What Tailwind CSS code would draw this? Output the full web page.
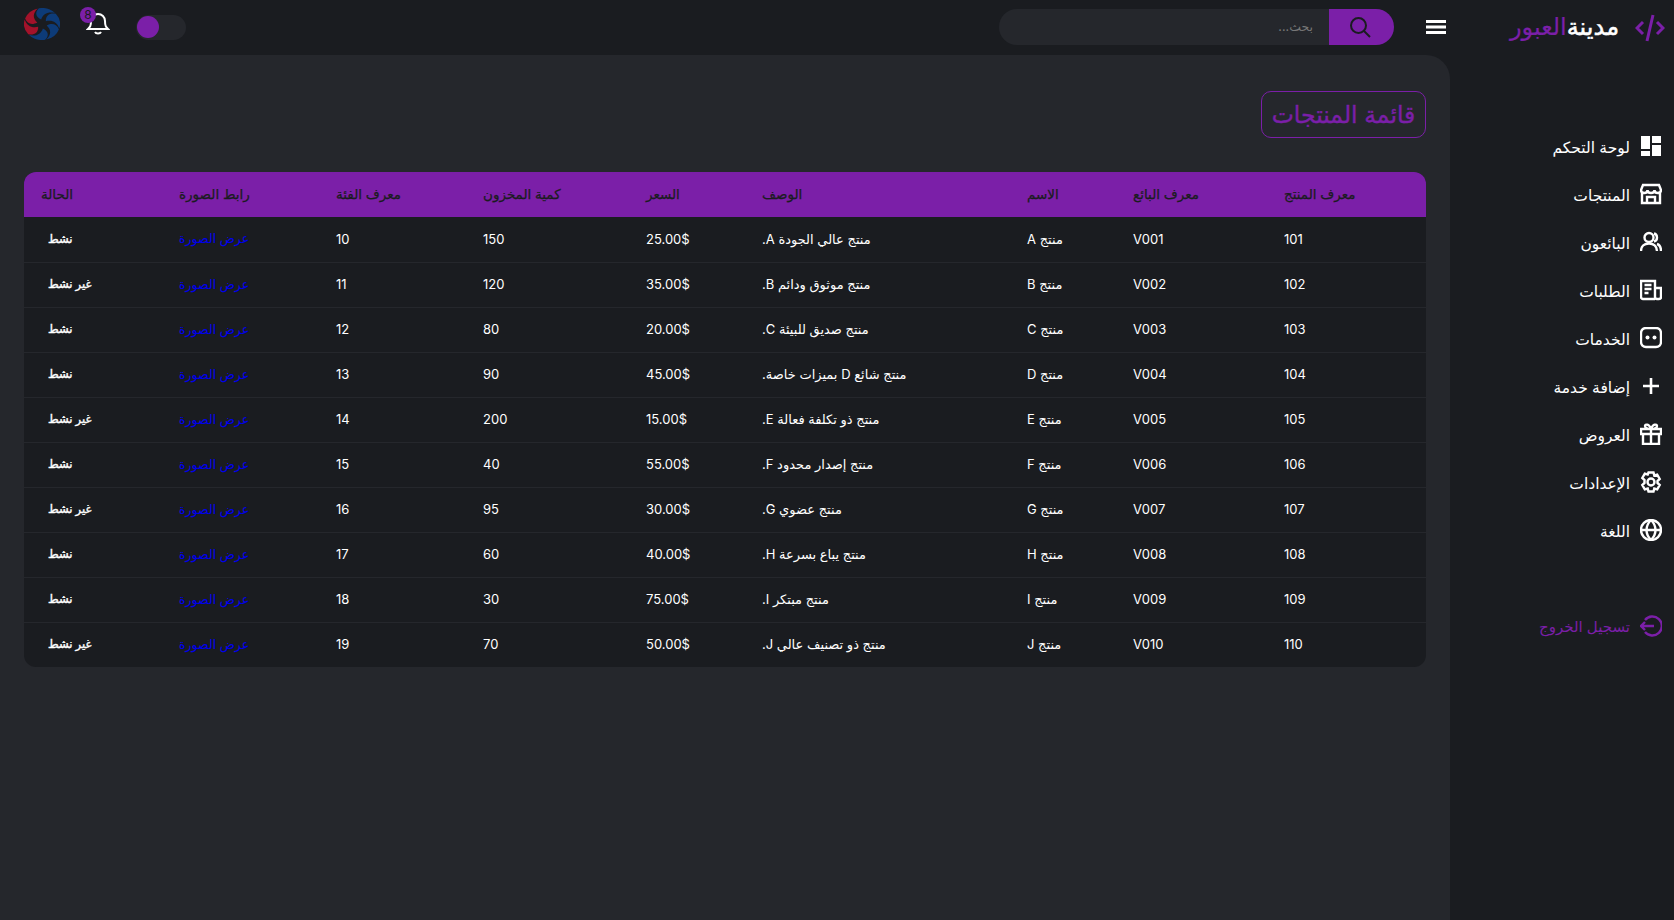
<!DOCTYPE html>
<html lang="ar" dir="rtl">
<head>
    <meta charset="UTF-8">
    <title>قائمة المنتجات</title>
    <script src="https://cdn.jsdelivr.net/npm/@tailwindcss/browser@4"></script>
</head>
<body class="h-screen overflow-hidden bg-[#1a1c20] font-['Inter','DejaVu_Sans',sans-serif] text-white">
    <div class="flex h-full">
        <!-- sidebar -->
        <aside class="w-[224px] shrink-0">
            <div class="flex h-[55px] items-center gap-[16px] pr-[9px]">
                <svg class="h-[30px] w-[30px] shrink-0 text-[#7b1fa8]" viewBox="0 0 30 30" fill="none" stroke="currentColor" stroke-width="3"><path d="M8 9 2 15l6 6M22 9l6 6-6 6M18 2l-6 26"/></svg>
                <div class="mt-[-2px] text-[24px] leading-none [-webkit-text-stroke:0.5px]"><span>مدينة</span><span class="text-[#7b1fa8] [-webkit-text-stroke:0.2px]">العبور</span></div>
            </div>
            <nav class="mt-[67px] flex flex-col text-[15.5px]">
                <a class="flex h-[48px] items-center gap-[10px] pr-[12px]"><svg class="h-[22px] w-[22px]" viewBox="0 0 22 22" fill="currentColor"><path d="M1 1h9v13H1zM12 1h9v7h-9zM12 10h9v11h-9zM1 16h9v5H1z"/></svg><span class="mt-[3px]">لوحة التحكم</span></a>
                <a class="flex h-[48px] items-center gap-[10px] pr-[12px]"><svg class="h-[22px] w-[22px]" viewBox="0 0 22 22" fill="none" stroke="currentColor" stroke-width="2.400"><path d="M2 10v10h18V10M1 7l2-5h16l2 5c0 2-1.500 3-3.300 3S14.500 9 14.500 7c0 2-1.700 3-3.500 3S7.500 9 7.500 7c0 2-1.400 3-3.200 3S1 9 1 7ZM7 19v-5h8v5"/></svg><span class="mt-[3px]">المنتجات</span></a>
                <a class="flex h-[48px] items-center gap-[10px] pr-[12px]"><svg class="h-[22px] w-[22px]" viewBox="0 0 22 22" fill="none" stroke="currentColor" stroke-width="2.400"><circle cx="9" cy="6.500" r="4.500"/><path d="M1 20c0-5 3.500-7.500 8-7.500s8 2.500 8 7.500M14 2.500c4 .8 4 7 0 8M17 13c3 1 4 3.500 4 7"/></svg><span class="mt-[3px]">البائعون</span></a>
                <a class="flex h-[48px] items-center gap-[10px] pr-[12px]"><svg class="h-[22px] w-[22px]" viewBox="0 0 22 22" fill="none" stroke="currentColor" stroke-width="2.400"><path d="M15 20H3a2 2 0 0 1-2-2V2h14v16a2 2 0 0 0 2 2h2a2 2 0 0 0 2-2V9h-6M4.500 6h7M4.500 10h7M4.500 14h4"/></svg><span class="mt-[3px]">الطلبات</span></a>
                <a class="flex h-[48px] items-center gap-[10px] pr-[12px]"><svg class="h-[22px] w-[22px]" viewBox="0 0 22 22" fill="none" stroke="currentColor" stroke-width="2.400"><rect x="1" y="1" width="20" height="19" rx="5"/><circle cx="7.500" cy="10.500" r="2" fill="currentColor" stroke="none"/><circle cx="14.500" cy="10.500" r="2" fill="currentColor" stroke="none"/></svg><span class="mt-[3px]">الخدمات</span></a>
                <a class="flex h-[48px] items-center gap-[10px] pr-[12px]"><svg class="h-[22px] w-[22px]" viewBox="0 0 22 22" fill="none" stroke="currentColor" stroke-width="2.600"><path d="M11 3v16M3 11h16"/></svg><span class="mt-[3px]">إضافة خدمة</span></a>
                <a class="flex h-[48px] items-center gap-[10px] pr-[12px]"><svg class="h-[22px] w-[22px]" viewBox="0 0 22 22" fill="none" stroke="currentColor" stroke-width="2.400"><path d="M1 6h20v5H1zM3 11v10h16V11M11 6v15M11 6C8 6 5 5 5 3s4-2.500 6 3c2-5.500 6-5 6-3s-3 3-6 3Z"/></svg><span class="mt-[3px]">العروض</span></a>
                <a class="flex h-[48px] items-center gap-[10px] pr-[12px]"><svg class="h-[22px] w-[22px]" viewBox="0 0 22 22" fill="none" stroke="currentColor" stroke-width="2.400"><circle cx="11" cy="11" r="3.500"/><path d="M8.500 1.500h5l.8 3 2.900-.9 2.500 4.400-2.200 2v2l2.200 2-2.500 4.400-2.900-.9-.8 3h-5l-.8-3-2.900.9-2.500-4.400 2.200-2v-3l-2.200-2 2.500-4.400 2.900.9Z"/></svg><span class="mt-[3px]">الإعدادات</span></a>
                <a class="flex h-[48px] items-center gap-[10px] pr-[12px]"><svg class="h-[22px] w-[22px]" viewBox="0 0 22 22" fill="none" stroke="currentColor" stroke-width="2.400"><circle cx="11" cy="11" r="10"/><path d="M1 11h20M11 1c-6 6-6 14 0 20M11 1c6 6 6 14 0 20"/></svg><span class="mt-[3px]">اللغة</span></a>
                <a class="mt-[48px] flex h-[48px] items-center gap-[10px] pr-[12px] text-[15px] text-[#7b1fa8]"><svg class="h-[22px] w-[22px]" viewBox="0 0 22 22" fill="none" stroke="currentColor" stroke-width="2.400"><path d="M5 5a9.500 9.500 0 1 1 0 12M1 11h13M5 7l-4 4 4 4"/></svg><span class="mt-[3px]">تسجيل الخروج</span></a>
            </nav>
        </aside>

        <div class="flex min-w-0 flex-1 flex-col">
            <!-- top bar -->
            <header class="flex h-[55px] shrink-0 items-center pr-[4px] pl-[24px]">
                <svg class="mt-[-2px] h-[16px] w-[20px]" viewBox="0 0 20 16" fill="currentColor"><path d="M0 1h20v3H0zM0 6.500h20v3H0zM0 12h20v3H0z"/></svg>
                <form class="mt-[-1px] mr-[32px] flex h-[36px] w-[395px]">
                    <button type="button" class="flex w-[65px] items-center justify-center rounded-r-full bg-[#7b1fa8] pr-[4px] text-[#1a1c20]">
                        <svg class="h-[22px] w-[22px]" viewBox="0 0 22 22" fill="none" stroke="currentColor" stroke-width="2"><circle cx="9.500" cy="9.500" r="7.500"/><path d="m15 15 6 6"/></svg>
                    </button>
                    <input type="text" placeholder="بحث..." class="min-w-0 flex-1 rounded-l-full bg-[#25272c] px-[16px] text-[12.5px] outline-none placeholder:text-[#777]">
                </form>
                <div class="mr-auto flex items-center gap-[24px]">
                    <div class="mt-[-1px] ml-[2px] flex h-[25px] w-[50px] items-center justify-end rounded-full bg-[#25272c] pl-[1px]">
                        <span class="h-[22px] w-[22px] rounded-full bg-[#7b1fa8]"></span>
                    </div>
                    <div class="relative h-[28px] w-[26px]">
                        <svg class="absolute top-[-3px] left-[2px] h-[24px] w-[24px]" viewBox="0 0 24 24" fill="none" stroke="currentColor" stroke-width="2"><path d="M2 18c2-2 3-3 3-8a7 7 0 0 1 14 0c0 5 1 6 3 8ZM9 21c1 2 5 2 6 0"/></svg>
                        <span class="absolute top-[-7px] left-[-4px] flex h-[16px] w-[16px] items-center justify-center rounded-full bg-[#7b1fa8] text-[12px] text-[#1a1c20]">8</span>
                    </div>
                    <svg class="mt-[-7px] h-[32px] w-[36px]" viewBox="0 0 36 36" preserveAspectRatio="none">
                        <circle cx="18" cy="18" r="18" fill="#1a1c20"/>
                        <g fill="#a3122a">
                            <path transform="rotate(-70 18 18)" d="M18 13C13 9 13 4 18 0A18 18 0 0 1 33 8C26 5 21 7 18 13Z"/>
                            <path transform="rotate(-130 18 18)" d="M18 13C13 9 13 4 18 0A18 18 0 0 1 33 8C26 5 21 7 18 13Z"/>
                        </g>
                        <g fill="#0d3b78">
                            <path transform="rotate(-10 18 18)" d="M18 13C13 9 13 4 18 0A18 18 0 0 1 33 8C26 5 21 7 18 13Z"/>
                            <path transform="rotate(50 18 18)" d="M18 13C13 9 13 4 18 0A18 18 0 0 1 33 8C26 5 21 7 18 13Z"/>
                            <path transform="rotate(110 18 18)" d="M18 13C13 9 13 4 18 0A18 18 0 0 1 33 8C26 5 21 7 18 13Z"/>
                            <path transform="rotate(170 18 18)" d="M18 13C13 9 13 4 18 0A18 18 0 0 1 33 8C26 5 21 7 18 13Z"/>
                        </g>
                    </svg>
                </div>
            </header>

            <!-- main -->
            <main class="flex-1 rounded-tr-[24px] bg-[#25272c] px-[24px]">
                <div class="mt-[36px] flex">
                    <h1 class="flex h-[47px] w-[165px] items-center justify-center rounded-[10px] border border-[#7b1fa8] text-[23.5px] text-[#7b1fa8] [-webkit-text-stroke:0.4px]">قائمة المنتجات</h1>
                </div>
                <div class="mt-[34px] overflow-hidden rounded-[12px] bg-[#1a1c20]">
                    <table class="w-full table-fixed border-collapse text-[13px]">
                        <colgroup>
                            <col class="w-[159px]"><col class="w-[151px]"><col class="w-[106px]"><col class="w-[265px]"><col class="w-[116px]"><col class="w-[163px]"><col class="w-[147px]"><col class="w-[157px]"><col class="w-[138px]">
                        </colgroup>
                        <thead class="bg-[#7b1fa8] text-[#1a1c20]">
                            <tr class="h-[45px]">
                                <th class="pl-[17px] text-left text-[13.5px] font-normal [-webkit-text-stroke:0.25px]">معرف المنتج</th>
                                <th class="pl-[17px] text-left text-[13.5px] font-normal [-webkit-text-stroke:0.25px]">معرف البائع</th>
                                <th class="pl-[17px] text-left text-[13.5px] font-normal [-webkit-text-stroke:0.25px]">الاسم</th>
                                <th class="pl-[17px] text-left text-[13.5px] font-normal [-webkit-text-stroke:0.25px]">الوصف</th>
                                <th class="pl-[17px] text-left text-[13.5px] font-normal [-webkit-text-stroke:0.25px]">السعر</th>
                                <th class="pl-[17px] text-left text-[13.5px] font-normal [-webkit-text-stroke:0.25px]">كمية المخزون</th>
                                <th class="pl-[17px] text-left text-[13.5px] font-normal [-webkit-text-stroke:0.25px]">معرف الفئة</th>
                                <th class="pl-[17px] text-left text-[13.5px] font-normal [-webkit-text-stroke:0.25px]">رابط الصورة</th>
                                <th class="pl-[17px] text-left text-[13.5px] font-normal [-webkit-text-stroke:0.25px]">الحالة</th>
                            </tr>
                        </thead>
                        <tbody id="rows"></tbody>
                    </table>
                </div>
            </main>
        </div>
    </div>

    <script>
        const products = [
            [101, 'V001', 'A', 'منتج عالي الجودة A.', '25.00$', 150, 10, 'نشط'],
            [102, 'V002', 'B', 'منتج موثوق ودائم B.', '35.00$', 120, 11, 'غير نشط'],
            [103, 'V003', 'C', 'منتج صديق للبيئة C.', '20.00$', 80, 12, 'نشط'],
            [104, 'V004', 'D', 'منتج شائع D بميزات خاصة.', '45.00$', 90, 13, 'نشط'],
            [105, 'V005', 'E', 'منتج ذو تكلفة فعالة E.', '15.00$', 200, 14, 'غير نشط'],
            [106, 'V006', 'F', 'منتج إصدار محدود F.', '55.00$', 40, 15, 'نشط'],
            [107, 'V007', 'G', 'منتج عضوي G.', '30.00$', 95, 16, 'غير نشط'],
            [108, 'V008', 'H', 'منتج يباع بسرعة H.', '40.00$', 60, 17, 'نشط'],
            [109, 'V009', 'I', 'منتج مبتكر I.', '75.00$', 30, 18, 'نشط'],
            [110, 'V010', 'J', 'منتج ذو تصنيف عالي J.', '50.00$', 70, 19, 'غير نشط'],
        ];

        document.getElementById('rows').innerHTML = products.map((p, i) => `
            <tr class="h-[45px] ${i < products.length - 1 ? 'border-b border-[#25272c]' : ''}">
                <td class="pl-[17px] text-left">${p[0]}</td>
                <td class="pl-[17px] text-left">${p[1]}</td>
                <td class="pl-[17px] text-left">منتج ${p[2]}</td>
                <td class="pl-[17px] text-left">${p[3]}</td>
                <td class="pl-[17px] text-left">${p[4]}</td>
                <td class="pl-[17px] text-left">${p[5]}</td>
                <td class="pl-[17px] text-left">${p[6]}</td>
                <td class="pl-[17px] text-left"><a class="text-[12.5px] text-[#0000ee]">عرض الصورة</a></td>
                <td class="pl-[24px] text-left text-[11.5px] [-webkit-text-stroke:0.4px]">${p[7]}</td>
            </tr>`).join('');
    </script>
</body>
</html>
